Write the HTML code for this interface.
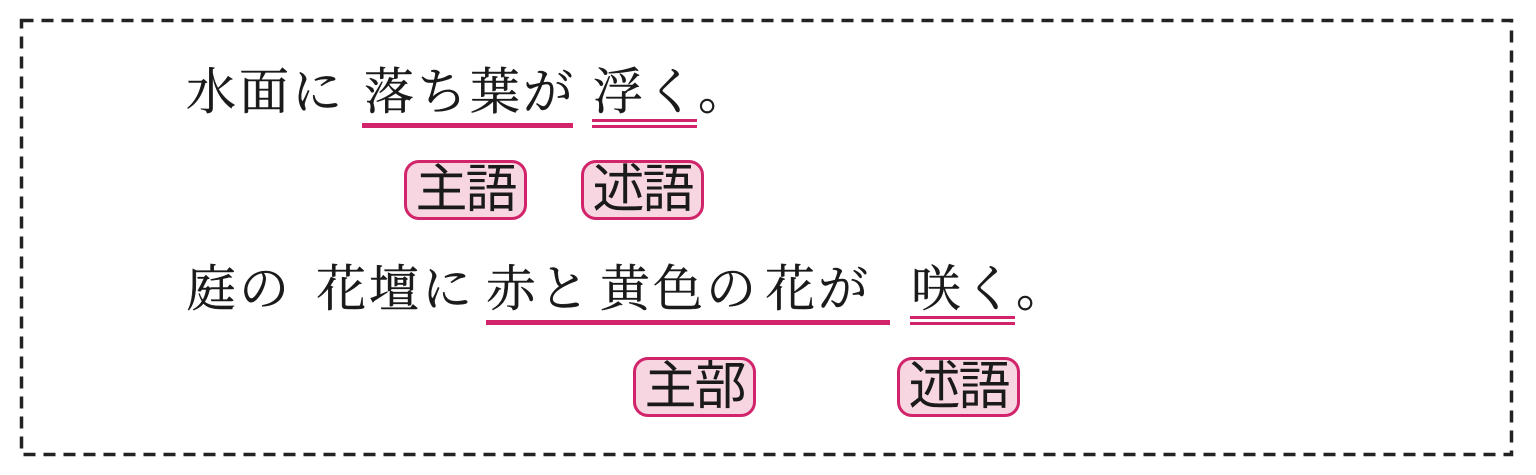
<!DOCTYPE html>
<html><head><meta charset="utf-8"><style>
body{margin:0;width:1536px;height:475px;background:#fff;position:relative;overflow:hidden}
svg{position:absolute;left:0;top:0}
.w{position:absolute;font-family:"Liberation Serif","Noto Serif CJK JP",serif;font-size:50px;letter-spacing:3px;color:#1a1a1a;line-height:1;white-space:nowrap;-webkit-text-stroke:0.4px #1a1a1a}
.u{position:absolute;background:#d1246a;height:5px}
.d{position:absolute;border-top:3px solid #d1246a;border-bottom:3px solid #d1246a;height:3px}
.b{position:absolute;width:123px;height:60px;box-sizing:border-box;border:3px solid #d1246a;border-radius:15px;background:#f7d6e1;font-family:"Liberation Sans","Noto Sans CJK JP",sans-serif;font-size:52px;line-height:54px;text-align:center;color:#1a1a1a;letter-spacing:-2px}
</style></head><body>
<svg width="1536" height="475"><rect x="21.5" y="20.5" width="1490" height="434" fill="none" stroke="#222" stroke-width="3.5" stroke-dasharray="12 8"/></svg>
<div class="w" style="left:186px;top:67px">水面に</div>
<div class="w" style="left:364px;top:67px">落ち葉が</div>
<div class="w" style="left:593px;top:67px">浮く。</div>
<div class="u" style="left:362px;top:123px;width:211px"></div>
<div class="d" style="left:592px;top:119px;width:105px"></div>
<div class="b" style="left:404px;top:160px">主語</div>
<div class="b" style="left:581px;top:160px">述語</div>
<div class="w" style="left:186px;top:264px">庭の</div>
<div class="w" style="left:316px;top:264px">花壇に</div>
<div class="w" style="left:486px;top:264px">赤と</div>
<div class="w" style="left:600px;top:264px">黄色の</div>
<div class="w" style="left:765px;top:264px">花が</div>
<div class="w" style="left:911px;top:264px">咲く。</div>
<div class="u" style="left:486px;top:320px;width:404px"></div>
<div class="d" style="left:910px;top:316px;width:105px"></div>
<div class="b" style="left:633px;top:357px">主部</div>
<div class="b" style="left:897px;top:357px">述語</div>
</body></html>
